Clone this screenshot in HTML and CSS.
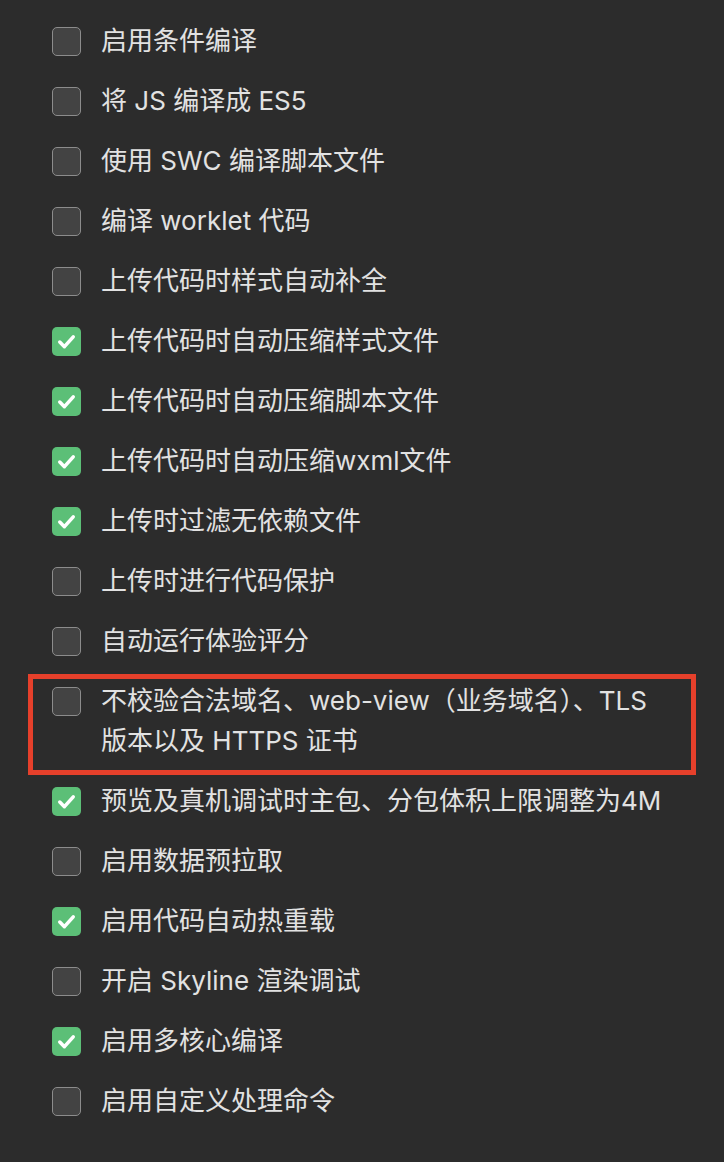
FILE: index.html
```html
<!DOCTYPE html>
<html lang="zh-CN">
<head>
    <meta charset="UTF-8">
    <title>设置</title>
    <link rel="stylesheet" href="styles.css">
</head>
<body>
    <ul class="options">
        <li class="option"><span class="box"></span><span class="label">启用条件编译</span></li>
        <li class="option"><span class="box"></span><span class="label">将 JS 编译成 ES5</span></li>
        <li class="option"><span class="box"></span><span class="label">使用 SWC 编译脚本文件</span></li>
        <li class="option"><span class="box"></span><span class="label">编译 worklet 代码</span></li>
        <li class="option"><span class="box"></span><span class="label">上传代码时样式自动补全</span></li>
        <li class="option checked"><span class="box"><svg viewBox="0 0 28 28"><path d="M7.5 14.5l4.5 4.5 8.5-9.5"/></svg></span><span class="label">上传代码时自动压缩样式文件</span></li>
        <li class="option checked"><span class="box"><svg viewBox="0 0 28 28"><path d="M7.5 14.5l4.5 4.5 8.5-9.5"/></svg></span><span class="label">上传代码时自动压缩脚本文件</span></li>
        <li class="option checked"><span class="box"><svg viewBox="0 0 28 28"><path d="M7.5 14.5l4.5 4.5 8.5-9.5"/></svg></span><span class="label">上传代码时自动压缩wxml文件</span></li>
        <li class="option checked"><span class="box"><svg viewBox="0 0 28 28"><path d="M7.5 14.5l4.5 4.5 8.5-9.5"/></svg></span><span class="label">上传时过滤无依赖文件</span></li>
        <li class="option"><span class="box"></span><span class="label">上传时进行代码保护</span></li>
        <li class="option"><span class="box"></span><span class="label">自动运行体验评分</span></li>
        <li class="option highlight"><span class="box"></span><span class="label">不校验合法域名、web-view（业务域名）、TLS<br>版本以及 HTTPS 证书</span></li>
        <li class="option checked"><span class="box"><svg viewBox="0 0 28 28"><path d="M7.5 14.5l4.5 4.5 8.5-9.5"/></svg></span><span class="label">预览及真机调试时主包、分包体积上限调整为4M</span></li>
        <li class="option"><span class="box"></span><span class="label">启用数据预拉取</span></li>
        <li class="option checked"><span class="box"><svg viewBox="0 0 28 28"><path d="M7.5 14.5l4.5 4.5 8.5-9.5"/></svg></span><span class="label">启用代码自动热重载</span></li>
        <li class="option"><span class="box"></span><span class="label">开启 Skyline 渲染调试</span></li>
        <li class="option checked"><span class="box"><svg viewBox="0 0 28 28"><path d="M7.5 14.5l4.5 4.5 8.5-9.5"/></svg></span><span class="label">启用多核心编译</span></li>
        <li class="option"><span class="box"></span><span class="label">启用自定义处理命令</span></li>
    </ul>
</body>
</html>
```

FILE: styles.css
```css
body {
    margin: 0;
    background-color: #2c2c2c;
    font-family: Inter, "Noto Sans CJK SC", sans-serif;
    color: #e2e2e2;
}
.options {
    list-style: none;
    margin: 0;
    padding: 11px 0 0 52px;
}
.option {
    position: relative;
    display: flex;
    align-items: flex-start;
    gap: 20px;
    padding: 10px 0;
}
.box {
    flex: none;
    box-sizing: border-box;
    width: 29px;
    height: 29px;
    margin-top: 6px;
    border: 1.5px solid #8c8c8c;
    border-radius: 5px;
    background-color: #434343;
}
.checked .box {
    border: none;
    background-color: #5cbf77;
}
.box svg {
    display: block;
    width: 29px;
    height: 29px;
    fill: none;
    stroke: #fff;
    stroke-width: 3.4;
    stroke-linecap: round;
    stroke-linejoin: round;
}
.label {
    font-size: 26px;
    line-height: 40px;
}
.highlight::after {
    content: "";
    position: absolute;
    left: -24px;
    right: 28px;
    top: 3px;
    bottom: -4px;
    border: 5px solid #e6402b;
    pointer-events: none;
}
```
